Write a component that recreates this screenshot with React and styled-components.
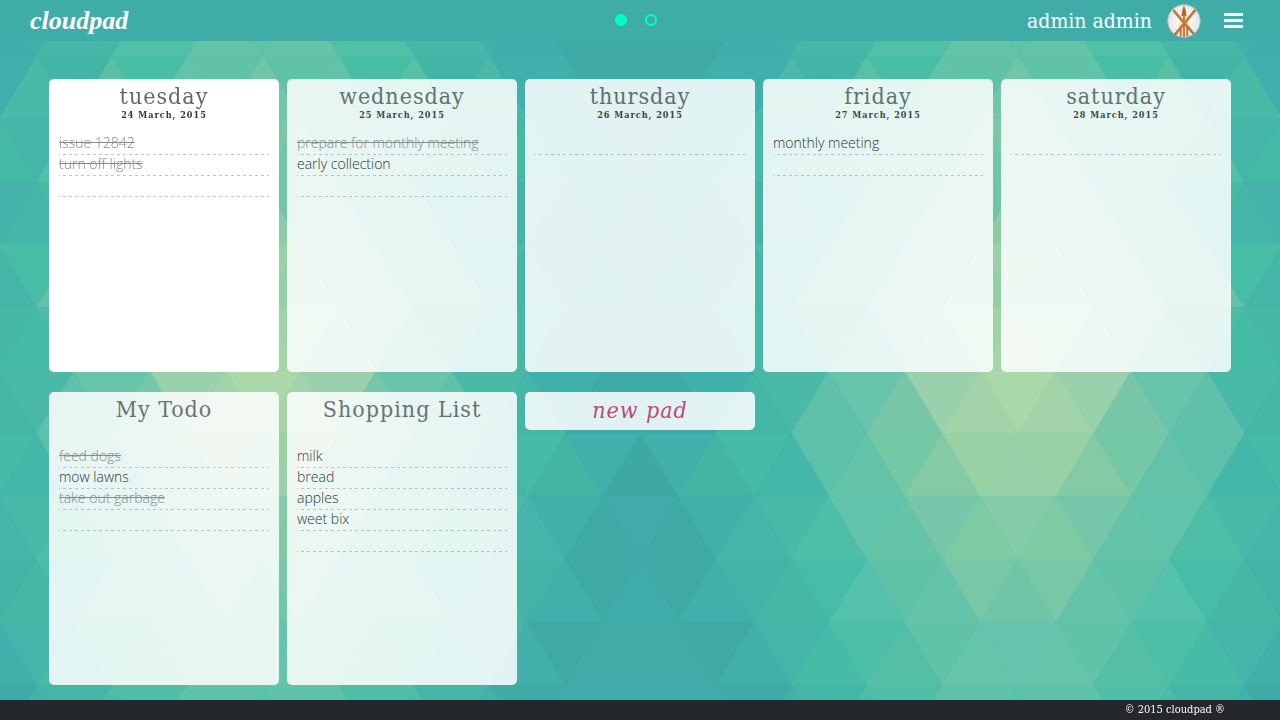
import React from 'react';
import styled, { createGlobalStyle } from 'styled-components';

const slab = '"DejaVu Serif Condensed", "DejaVu Serif", serif';
const sans = '"Open Sans", "Noto Sans", sans-serif';

const GlobalStyle = createGlobalStyle`
  *, *::before, *::after { box-sizing: border-box; }
  body { margin: 0; background: #46b8a7; font-family: ${sans}; color: #333; }
  h2, p, ul { margin: 0; padding: 0; }
  ul { list-style: none; }
  button { border: 0; padding: 0; background: none; cursor: pointer; }
`;

const Page = styled.div`
  min-height: 100vh;
  display: flex;
  flex-direction: column;
`;

const Backdrop = styled.svg`
  position: fixed;
  inset: 0;
  width: 100%;
  height: 100%;
  z-index: -1;
`;

const TopBar = styled.header`
  display: grid;
  grid-template-columns: 1fr auto 1fr;
  align-items: center;
  height: 41px;
  padding: 0 37px 0 30px;
  background: #40aca8;
`;

const Logo = styled.a`
  justify-self: start;
  font: italic bold 26px/36px "Liberation Serif", serif;
  color: #fff;
  text-decoration: none;
`;

const Pager = styled.nav`
  display: flex;
  gap: 18px;
  padding: 0 2px 2px 0;
`;

const PageDot = styled.button`
  width: 12px;
  height: 12px;
  border: 2px solid #00ffc8;
  border-radius: 50%;
  background: ${(p) => (p.$active ? '#00ffc8' : 'transparent')};
`;

const Account = styled.div`
  display: flex;
  align-items: center;
  justify-content: flex-end;
`;

const UserName = styled.a`
  font: 21px/24px ${slab};
  color: #fff;
  text-decoration: none;
`;

const Avatar = styled.svg`
  width: 34px;
  height: 34px;
  margin: 0 23px 0 15px;
`;

const MenuButton = styled.button`
  display: flex;
  flex-direction: column;
  gap: 3px;
  width: 19px;
`;

const MenuBar = styled.span`
  height: 3px;
  background: #fff;
`;

const Board = styled.main`
  flex: 1;
  display: grid;
  grid-template-columns: repeat(5, minmax(0, 1fr));
  align-content: start;
  gap: 20px 8px;
  padding: 38px 49px 15px;
`;

const Pad = styled.section`
  min-height: 293px;
  padding: 0 10px 10px;
  border-radius: 5px;
  background: #fff;
  opacity: ${(p) => (p.$today ? 1 : 0.85)};
`;

const PadHead = styled.div`
  height: 55px;
  padding-top: 4px;
  text-align: center;
`;

const PadTitle = styled.h2`
  font: 23px/26px ${slab};
  letter-spacing: 1px;
  color: #666;
`;

const PadDate = styled.p`
  font: bold 9px/12px ${slab};
  letter-spacing: 1px;
  color: #333;
`;

const Line = styled.li`
  height: 21px;
  font: 300 14px/18px ${sans};
  color: ${(p) => (p.$done ? '#888' : '#222')};
  text-decoration: ${(p) => (p.$done ? 'line-through' : 'none')};
  background: repeating-linear-gradient(90deg, #c4c4c4 0 1px, transparent 1px 4px, #c4c4c4 4px 6px) bottom / 100% 1px no-repeat;
`;

const NewItem = styled.input`
  display: block;
  width: 100%;
  height: 20px;
  padding: 0;
  border: 0;
  outline: 0;
  background: transparent;
  font: 300 14px/18px ${sans};
  color: #222;
`;

const NewPad = styled.button`
  align-self: start;
  height: 38px;
  padding-bottom: 2px;
  border-radius: 5px;
  background: #fff;
  opacity: 0.85;
  font: italic 23px/26px ${slab};
  letter-spacing: 1px;
  color: #cc3d6c;
`;

const Footer = styled.footer`
  height: 20px;
  padding: 0 55px;
  background: #24282c;
  color: #fff;
  font: 11px/20px ${slab};
  text-align: right;
`;

/* Facet colours, from the dark column to the bright one, top row first. */
const facets = [
  '3fa9a5 3fa9a5 3fa9a5 40aeaa 42b1a9 45b8a7 46b8a7 50c0a7 50c0a7 62c3a7 5ec2a8',
  '3fa9a4 3fa9a5 41b0ab 40b0ac 4ab9a8 43b5a7 58c1a4 48bfa5 62c3a8 60c3a8 70c6a6',
  '40acaa 41b0ab 40b0ab 45baa6 44b6a7 50c0a7 5ac1a8 62c3a8 68c4a8 72c6a8 7bc8a7',
  '40acaa 41b0ab 42b0ab 45b3aa 44b5a7 46bca6 62c3a8 62c3a8 7ac8a7 70c5a9 8acca6',
  '40adaa 41b0ab 42b0a8 44b5a6 47bda6 62c3a8 5ac1aa 74c6a8 7ac8a8 92cfa7 98d1a7',
  '3fa9a4 3fa9a7 42afa9 46b8a7 45bba5 4cbba9 60c2a8 70c6a8 92d0a8 9dd3a8 a5d6a7',
  '3fa9a5 3fa9a7 41afab 44b6a6 4ab9a8 5fc1a9 68c4ab 78c6a8 98d1ac a3d4a9 aad8a8',
  '3fa8a4 40b0aa 43b5a3 46bba6 43b7a8 5dc0aa 62c3a9 75c8a5 84cba5 98d1a4 96d1a8',
  '40aba9 3fa9a4 40b0aa 45b5a9 4ab9a9 4ebfa6 61c3aa 65c4a8 76c7a9 7dcaa3 86cba9',
  '40aca9 3faaa5 40b0aa 43b3a6 46b6a6 46bda6 53c1ab 5fc2a6 64c4a9 78c7a7 6fc5a8',
  '40aba7 40aba7 3ea9a5 42afab 45b4a9 46bba5 4ebfa7 54bfa6 60c3a8 65c4a9 65c4ab',
  '40aba8 40aba8 40aba8 40aaa7 42b1a7 45b6a6 4cbda6 4fbfa7 5ec2a9 60c3a9 58c3ac',
].map((row) => row.split(' '));

const HALF = 37.75;
const ROW = 62.9;

function Mosaic() {
  const shapes = [];
  facets.forEach((row, r) => {
    for (let c = -18; c <= 18; c += 1) {
      const a = Math.abs(c);
      const fill = `#${row[a > 10 ? 20 - a : a]}`;
      const x = 640.7 + c * HALF;
      const top = -7 + r * ROW;
      const bottom = top + ROW;
      const up = (r + a) % 2 === 1;
      const [tip, base] = up ? [top, bottom] : [bottom, top];
      shapes.push(
        <polygon
          key={`${r}:${c}`}
          points={`${x},${tip} ${x - HALF},${base} ${x + HALF},${base}`}
          fill={fill}
          stroke={fill}
          strokeWidth="0.6"
        />
      );
    }
  });
  return (
    <Backdrop viewBox="0 0 1280 720" preserveAspectRatio="xMidYMid slice" aria-hidden="true">
      {shapes}
    </Backdrop>
  );
}

function UserPicture() {
  return (
    <Avatar viewBox="0 0 34 34" role="img" aria-label="admin admin">
      <defs>
        <radialGradient id="disc">
          <stop offset="0" stopColor="#fff" />
          <stop offset="1" stopColor="#e6e6e6" />
        </radialGradient>
      </defs>
      <circle cx="17" cy="17" r="16.4" fill="url(#disc)" stroke="#b3a9a5" strokeWidth="0.8" />
      <path d="M12 31V15L17 2l5 13v16q-5 3-10 0z" fill="#f3dfca" />
      <path d="M15.4 6L17 1.500 18.6 6l.8 6h-4.8z" fill="#b5651d" />
      <path d="M17 11v22M13.8 22v10M20.2 22v10" stroke="#c27832" strokeWidth="1.8" />
      <path d="M7 7L26 29M27.500 7L8.500 30" stroke="#b56a22" strokeWidth="2.6" strokeLinecap="round" />
      <path d="M7 7l19 21M27 7.500L9 29" stroke="#dc9450" strokeWidth="0.8" />
    </Avatar>
  );
}

const pads = [
  { title: 'tuesday', date: '24 March, 2015', today: true, items: [['issue 12842', true], ['turn off lights', true]] },
  { title: 'wednesday', date: '25 March, 2015', items: [['prepare for monthly meeting', true], ['early collection']] },
  { title: 'thursday', date: '26 March, 2015', items: [] },
  { title: 'friday', date: '27 March, 2015', items: [['monthly meeting']] },
  { title: 'saturday', date: '28 March, 2015', items: [] },
  { title: 'My Todo', items: [['feed dogs', true], ['mow lawns'], ['take out garbage', true]] },
  { title: 'Shopping List', items: [['milk'], ['bread'], ['apples'], ['weet bix']] },
];

export default function App() {
  return (
    <Page>
      <GlobalStyle />
      <Mosaic />
      <TopBar>
        <Logo href="#home">cloudpad</Logo>
        <Pager aria-label="Pages">
          <PageDot $active type="button" aria-label="Page 1" />
          <PageDot type="button" aria-label="Page 2" />
        </Pager>
        <Account>
          <UserName href="#account">admin admin</UserName>
          <UserPicture />
          <MenuButton type="button" aria-label="Menu">
            <MenuBar />
            <MenuBar />
            <MenuBar />
          </MenuButton>
        </Account>
      </TopBar>
      <Board>
        {pads.map((pad) => (
          <Pad key={pad.title} $today={pad.today}>
            <PadHead>
              <PadTitle>{pad.title}</PadTitle>
              {pad.date && <PadDate>{pad.date}</PadDate>}
            </PadHead>
            <ul>
              {pad.items.map(([text, done]) => (
                <Line key={text} $done={done}>{text}</Line>
              ))}
              <Line>
                <NewItem type="text" aria-label={`Add to ${pad.title}`} />
              </Line>
            </ul>
          </Pad>
        ))}
        <NewPad type="button">new pad</NewPad>
      </Board>
      <Footer>© 2015 cloudpad ®</Footer>
    </Page>
  );
}
